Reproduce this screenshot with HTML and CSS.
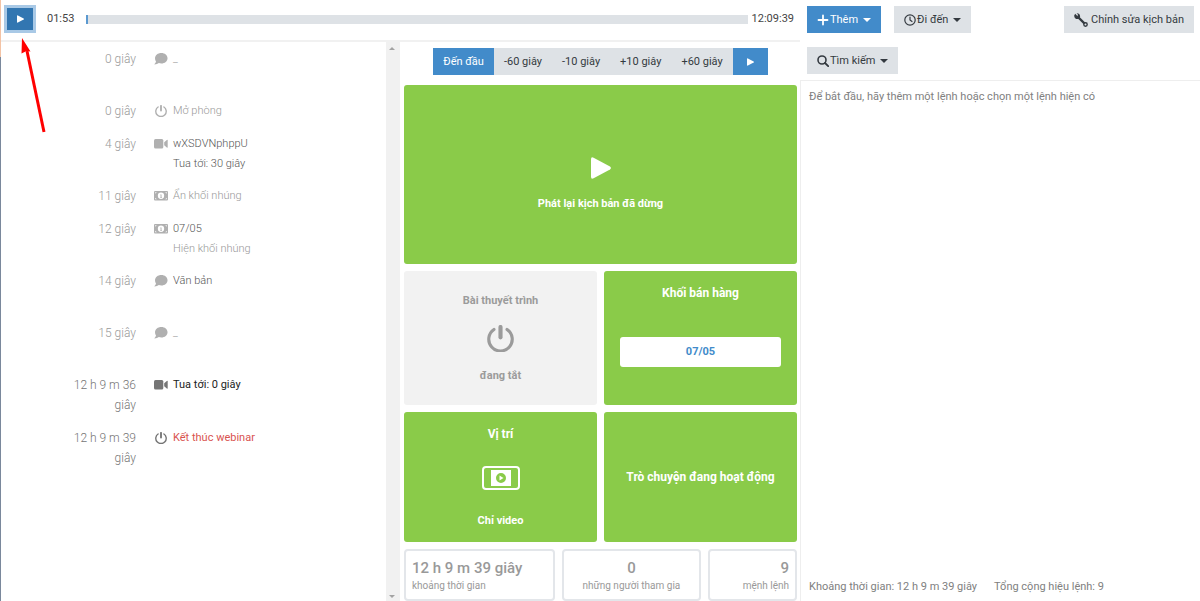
FILE: index.html
```html
<!DOCTYPE html>
<html lang="vi">
<head>
<meta charset="utf-8">
<title>Kịch bản webinar</title>
<link rel="stylesheet" href="styles.css">
</head>
<body>
<svg width="0" height="0" class="sprite" aria-hidden="true">
  <symbol id="play" viewBox="0 0 20 22"><path d="M0 2.200Q0-.6 2.600.7L19 9.600q1.800 1.400 0 2.800L2.600 21.300Q0 22.600 0 19.800z"/></symbol>
  <symbol id="comment" viewBox="0 0 12 11"><path d="M6.300 0C9.500 0 12 2 12 4.800S9.500 9.600 6.300 9.600c-.8 0-1.600-.1-2.300-.4C3 10 1.700 10.500.2 10.500c-.3 0-.3-.3-.1-.5C.9 9.200 1.300 8.400 1.400 7.700.8 6.900.5 5.900.5 4.800.500 2 3.100 0 6.300 0z"/></symbol>
  <symbol id="power" viewBox="0 0 26 26"><path d="M6.700 4.300a11.300 11.300 0 1 0 12.600 0" fill="none" stroke="currentColor" stroke-width="3" stroke-linecap="round"/><path d="M13 1.900v10" stroke="currentColor" stroke-width="4" stroke-linecap="round"/></symbol>
  <symbol id="camera" viewBox="0 0 14 10"><rect width="9.300" height="9.500" rx="1.500"/><path d="M10.200 3.200 12.800 1q.9-.5.9.4v6.700q0 .9-.9.4l-2.600-2.200z"/></symbol>
  <symbol id="banner" viewBox="0 0 14 10"><path fill-rule="evenodd" d="M1 0h12q1 0 1 1v7.500q0 1-1 1H1q-1 0-1-1V1q0-1 1-1zM1.200 1.200v1.600L2.800 1.200zm11.600 0h-1.600l1.600 1.600zM1.200 8.300h1.600L1.200 6.700zm11.600 0V6.700l-1.600 1.600zM7 1.600a3.100 3.100 0 1 0 0 6.300 3.100 3.100 0 0 0 0-6.300z"/><path d="M6.300 3.500h1.200v2.600H8v.7H6.200v-.7h.4V4.200h-.3z"/></symbol>
</svg>
<div class="app">
  <main class="studio">
    <header class="timeline">
      <button class="btn primary focused" type="button" aria-label="Phát"><svg class="play-sm"><use href="#play"/></svg></button>
      <span class="clock">01:53</span>
      <div class="track"><div class="elapsed"></div></div>
      <span class="total">12:09:39</span>
    </header>
    <div class="workspace">
      <section class="script">
        <ul class="events">
          <li class="event tall"><span class="time">0 giây</span><svg class="icon"><use href="#comment"/></svg><div>_</div></li>
          <li class="event"><span class="time">0 giây</span><svg class="icon"><use href="#power"/></svg><div>Mở phòng</div></li>
          <li class="event tall"><span class="time">4 giây</span><svg class="icon"><use href="#camera"/></svg><div class="strong"><p>wXSDVNphppU</p><p>Tua tới: 30 giây</p></div></li>
          <li class="event"><span class="time">11 giây</span><svg class="icon"><use href="#banner"/></svg><div>Ẩn khối nhúng</div></li>
          <li class="event tall"><span class="time">12 giây</span><svg class="icon"><use href="#banner"/></svg><div><p class="strong">07/05</p><p>Hiện khối nhúng</p></div></li>
          <li class="event tall"><span class="time">14 giây</span><svg class="icon"><use href="#comment"/></svg><div class="strong">Văn bản</div></li>
          <li class="event tall"><span class="time">15 giây</span><svg class="icon"><use href="#comment"/></svg><div>_</div></li>
          <li class="event tall upcoming"><span class="time">12 h 9 m 36 giây</span><svg class="icon"><use href="#camera"/></svg><div class="dark">Tua tới: 0 giây</div></li>
          <li class="event tall upcoming"><span class="time">12 h 9 m 39 giây</span><svg class="icon"><use href="#power"/></svg><div class="danger">Kết thúc webinar</div></li>
        </ul>
        <div class="scrollbar" aria-hidden="true"><i class="up"></i><i class="down"></i></div>
      </section>
      <section class="console">
        <div class="seek">
          <button class="btn primary" type="button">Đến đầu</button>
          <button class="btn" type="button">-60 giây</button>
          <button class="btn" type="button">-10 giây</button>
          <button class="btn" type="button">+10 giây</button>
          <button class="btn" type="button">+60 giây</button>
          <button class="btn primary seek-play" type="button" aria-label="Phát"><svg class="play-sm"><use href="#play"/></svg></button>
        </div>
        <div class="cards">
          <button class="card wide" type="button"><svg class="play-lg"><use href="#play"/></svg><span>Phát lại kịch bản đã dừng</span></button>
          <button class="card off" type="button"><span>Bài thuyết trình</span><svg class="power-lg"><use href="#power"/></svg><span>đang tắt</span></button>
          <div class="card sales"><h2>Khối bán hàng</h2><button class="offer" type="button">07/05</button></div>
          <button class="card place" type="button"><span class="title">Vị trí</span>
            <svg class="layout" viewBox="0 0 38 24"><rect x="1" y="1" width="36" height="22" rx="3" fill="none" stroke="currentColor" stroke-width="2"/><path fill-rule="evenodd" d="M9 4h20v16H9zM19 7a5 5 0 1 0 0 10 5 5 0 0 0 0-10z"/><path d="M17.500 9.500v5l4-2.500z"/></svg>
            <span>Chỉ video</span></button>
          <button class="card" type="button"><span class="title">Trò chuyện đang hoạt động</span></button>
        </div>
        <div class="stats">
          <div class="stat"><b>12 h 9 m 39 giây</b><span>khoảng thời gian</span></div>
          <div class="stat center"><b>0</b><span>những người tham gia</span></div>
          <div class="stat right"><b>9</b><span>mệnh lệnh</span></div>
        </div>
      </section>
    </div>
  </main>
  <aside class="editor">
    <div class="tools">
      <button class="btn primary caret" type="button"><svg class="tool" viewBox="0 0 12 12"><path d="M6 1.500v9M1.500 6h9" stroke="currentColor" stroke-width="1.800" stroke-linecap="round"/></svg>Thêm</button>
      <button class="btn caret" type="button"><svg class="tool" viewBox="0 0 12 12"><circle cx="6" cy="6" r="5.200" fill="none" stroke="currentColor" stroke-width="1.200"/><path d="M6 3v3l2 1.500" fill="none" stroke="currentColor" stroke-width="1.200" stroke-linecap="round"/></svg>Đi đến</button>
      <button class="btn edit" type="button"><svg class="wrench" viewBox="0 0 14 14"><path d="m4.500 4.500 7 7" stroke="currentColor" stroke-width="2.400"/><path d="M1.200.8 3.600 3.200 3.800 1.300 2.500.3C4.500-.1 6.600 1.600 6 4.200L4.200 6C1.800 6.500-.2 4.500.3 2.200z"/><circle cx="11.500" cy="11.500" r="1.700" fill="#dee2e6" stroke="currentColor" stroke-width="1.400"/></svg>Chỉnh sửa kịch bản</button>
      <button class="btn caret search" type="button"><svg class="tool" viewBox="0 0 12 12"><circle cx="5" cy="5" r="4" fill="none" stroke="currentColor" stroke-width="1.600"/><path d="m8 8 3.200 3.200" stroke="currentColor" stroke-width="1.800" stroke-linecap="round"/></svg>Tìm kiếm</button>
    </div>
    <div class="details">
      <p>Để bắt đầu, hãy thêm một lệnh hoặc chọn một lệnh hiện có</p>
      <footer><span>Khoảng thời gian: 12 h 9 m 39 giây</span><span>Tổng cộng hiệu lệnh: 9</span></footer>
    </div>
  </aside>
</div>
<svg class="pointer" viewBox="0 0 30 100" aria-hidden="true"><path d="m8 16 17 81" stroke="#f00" stroke-width="3"/><path fill="#f00" d="M3 3 11.500 16.500 7.500 16 2.500 18.500z"/></svg>
</body>
</html>
```

FILE: styles.css
```css
* { box-sizing: border-box; }
body { margin: 0; background: #fff; color: #808080; font: 11px/20px Roboto, "Noto Sans", sans-serif; }
p, h2, ul { margin: 0; padding: 0; }
svg { display: block; fill: currentColor; flex: none; }
button { font: inherit; border: 0; cursor: pointer; }
.sprite { position: absolute; }

.app { display: grid; grid-template-columns: 2fr 1fr; min-height: 100vh; }
.app::before { content: ""; position: absolute; left: 0; top: 0; width: 1px; height: 100%; background: linear-gradient(#f3c3a5 57px, #7a889c 57px); }
.studio { display: flex; flex-direction: column; }
.timeline { display: flex; align-items: center; height: 42px; padding: 0 6px 2px 7px; border-bottom: 2px solid #f1f1f1; color: #444; }
.btn { display: flex; align-items: center; justify-content: center; gap: 1px; height: 27px; padding: 0 10px; background: #dee2e6; color: #343a40; white-space: nowrap; }
.btn.primary { background: #428bca; color: #fff; }
.btn.focused { width: 26px; height: 22px; padding: 0; background: #3276b1; box-shadow: 0 0 0 3px #a9c9e6; }
.play-sm { width: 7px; height: 8px; }
.clock { width: 53px; padding-left: 14px; }
.track { flex: 1; height: 9px; background: #dee2e6; }
.elapsed { width: 2px; height: 100%; background: #5b99d0; }
.total { width: 46px; text-align: right; }

.workspace { flex: 1; display: grid; grid-template-columns: 1fr 1fr; }
.script { display: flex; border-right: 2px solid #f1f1f1; }
.events { flex: 1; padding-top: 1px; list-style: none; }
.event { display: grid; grid-template-columns: 66px 27px 1fr; column-gap: 5px; padding: 6px 8px 7px 70px; color: #999; font-weight: 300; }
.event.tall { min-height: 52px; padding-bottom: 6px; }
.event.upcoming { min-height: 53px; }
.time { text-align: right; font-size: 12px; }
.icon { width: 14px; height: 12px; margin: 4px 0 0 13px; color: #b0b0b0; }
.strong { color: #555; }
.upcoming, .upcoming .icon { color: #757575; }
.upcoming .dark { color: #222; font-weight: 400; }
.upcoming .danger { color: #d9534f; font-weight: 400; }
.scrollbar { display: flex; flex-direction: column; justify-content: space-between; align-items: center; width: 12px; padding: 5px 0 3px; background: #f1f1f1; }
.up, .down { border: 3px solid transparent; border-top-width: 0; border-bottom: 3px solid #a3a3a3; }
.down { border-top: 3px solid #a3a3a3; border-bottom-width: 0; }

.console { display: flex; flex-direction: column; padding: 6px 3px 0 4px; }
.seek { display: flex; justify-content: center; margin-bottom: 10px; }
.seek-play { width: 35px; }
.cards { flex: 1; display: grid; grid-template-columns: 1fr 1fr; grid-template-rows: 179fr 135fr 130fr; gap: 7px; }
.card { display: flex; flex-direction: column; align-items: center; justify-content: center; padding: 12px 16px; border-radius: 3px; background: #8acb49; color: #fff; font-weight: 700; }
.wide { grid-column: span 2; gap: 15px; padding-top: 34px; }
.play-lg { width: 20px; height: 22px; }
.off { gap: 14px; padding-top: 14px; background: #f2f2f2; color: #9b9b9b; }
.power-lg { width: 27px; height: 27px; }
.sales { justify-content: flex-start; }
.title, h2 { font-size: 12px; line-height: 20px; font-weight: 700; }
.offer { width: 100%; height: 30px; margin-top: 34px; border-radius: 3px; background: #fff; color: #428bca; }
.place { justify-content: space-between; padding-bottom: 11px; }
.layout { width: 38px; height: 24px; }
.stats { display: grid; grid-template-columns: 151fr 140fr 89fr; gap: 7px; margin-top: 7px; }
.stat { height: 52px; padding: 8px 6px 0; border: 2px solid #e3e6ea; border-radius: 4px; white-space: nowrap; }
.stat b, .stat span { display: block; }
.stat b { font-size: 15px; line-height: 18px; font-weight: 500; color: #999; }
.stat span { font-size: 10px; line-height: 18px; color: #999; }
.stat.center { text-align: center; }
.stat.right { text-align: right; }

.editor { display: flex; flex-direction: column; }
.tools { display: flex; flex-wrap: wrap; gap: 14px 13px; padding: 6px 6px 6px 7px; }
.tool { width: 12px; height: 12px; }
.caret::after { content: ""; margin-left: 4px; border: 4px solid transparent; border-top-color: currentColor; border-bottom-width: 0; }
.edit { margin-left: auto; }
.wrench { width: 14px; height: 14px; margin-right: 2px; }
.details { flex: 1; display: flex; flex-direction: column; justify-content: space-between; padding: 6px 8px 4px; border: 1px solid #eee; border-width: 1px 0 0 1px; }
.details footer { display: flex; gap: 17px; }
.pointer { position: absolute; left: 19px; top: 35px; width: 30px; height: 100px; }
```
